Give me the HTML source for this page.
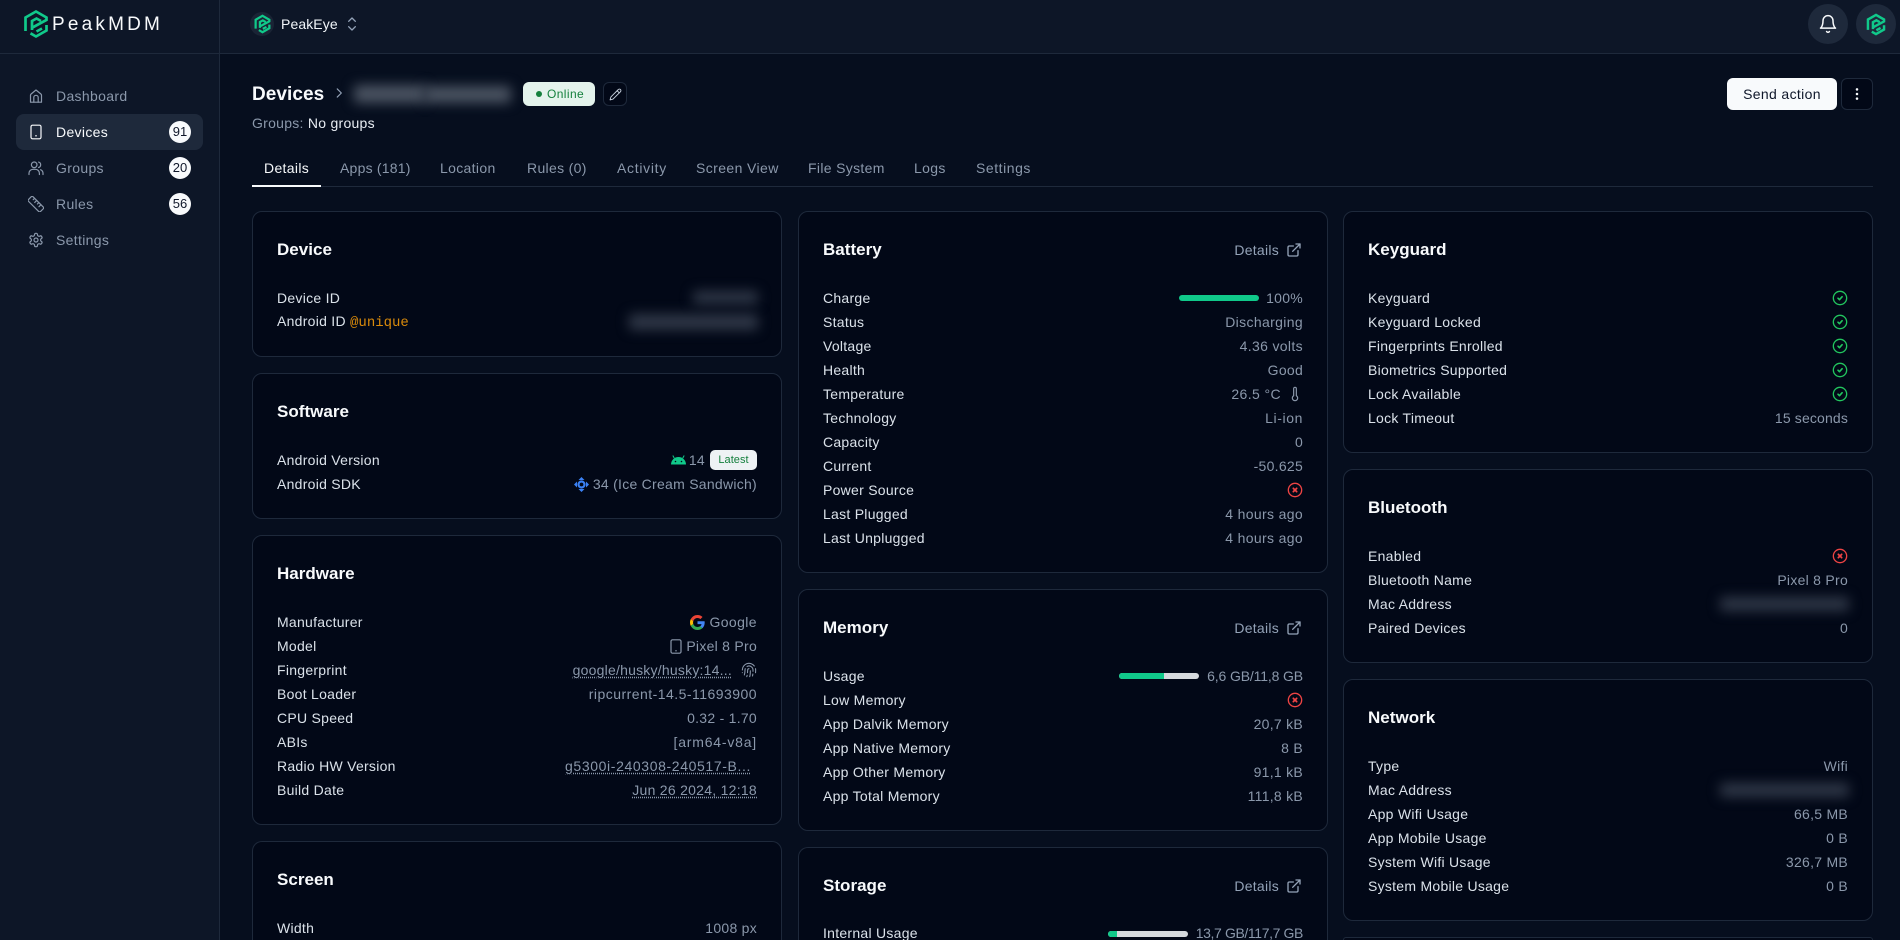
<!DOCTYPE html>
<html lang="en">
<head>
<meta charset="utf-8">
<title>PeakMDM - Devices</title>
<style>
*{box-sizing:border-box;margin:0;padding:0}
html,body{width:1900px;height:940px;overflow:hidden;background:#060e1e}
#root{position:relative;width:1900px;height:940px;overflow:hidden;background:#060e1e;font-family:"Liberation Sans",sans-serif;font-size:14px;letter-spacing:.27px;color:#e2e8f0}
.abs{position:absolute}
svg{display:block;flex:none}
.st{fill:none;stroke:currentColor;stroke-linecap:round;stroke-linejoin:round}
#head{left:0;top:0;width:1900px;height:54px;background:#0d1627;border-bottom:1px solid #1e293b}
#side{left:0;top:54px;width:220px;height:886px;background:#0d1627;border-right:1px solid #1e293b}
#vline{left:219px;top:0;width:1px;height:54px;background:#1e293b}
.logo{fill:none;stroke:#10c98a;stroke-linejoin:miter}
.brand{left:52px;top:12.5px;font-size:19px;letter-spacing:3.2px;color:#f8fafc;line-height:24px}
.nav{left:16px;width:187px;height:36px;border-radius:8px;color:#8b98ab}
.nav svg{position:absolute;left:12px;top:10px}
.nav span{position:absolute;left:40px;top:-.5px;line-height:36px;letter-spacing:.33px}
.nav b{position:absolute;left:153px;top:7px;width:22px;height:22px;border-radius:50%;background:#f8fafc;color:#0f172a;font-weight:400;font-size:13px;letter-spacing:0;text-align:center;line-height:22px}
.nav.on{background:#1e293b;color:#f8fafc}
.circ{top:4px;width:40px;height:40px;border-radius:50%;background:#1e293b;display:flex;align-items:center;justify-content:center}
.tab{top:156px;line-height:24px;color:#8b98ab;white-space:nowrap;letter-spacing:.33px}
.card{position:absolute;background:#020817;border:1px solid #1e293b;border-radius:10px;padding:24px}
.cut{border-bottom:0;border-radius:10px 10px 0 0;overflow:hidden}
.c1{left:252px;width:530px}.c2{left:798px;width:530px}.c3{left:1343px;width:530px}
.hd{display:flex;justify-content:space-between;align-items:center;height:28px;margin-bottom:22px}
.t{font-size:17px;font-weight:700;letter-spacing:.02px;color:#f8fafc;line-height:28px}
.det{display:flex;align-items:center;gap:7px;color:#94a3b8}
.r{display:flex;justify-content:space-between;align-items:center;height:24px;white-space:nowrap;color:#dbe2ea;line-height:23px}
.v{display:flex;align-items:center;gap:4px;color:#8b98ab}
.u{text-decoration:underline dotted #8b98ab;text-underline-offset:2px}
.bl{position:absolute;background:#3a4352;filter:blur(6px);border-radius:3px}
.bar{width:80px;height:6px;border-radius:3px;background:#d5d9dd;overflow:hidden;margin-right:4px}
.bar i{display:block;height:6px;background:#10c98a}
.ok{color:#22c55e}.no{color:#ef4444}
</style>
</head>
<body>
<div id="root">
<div class="abs" id="head"></div>
<div class="abs" id="side"></div>
<div class="abs" id="vline"></div>

<!-- logo -->
<svg class="abs logo" style="left:23px;top:9px" width="26" height="30" viewBox="0 0 26 30" stroke-width="2.700"><path d="M2.500 22V8.500L13 2.500 23.500 8.500V11L9.500 18.500"/><path d="M9 21V12L13.500 9.500 18 12"/><path d="M23.500 16V21.500L13 27.500 7.500 24.300"/><path d="M13.500 22.500L19 19.500"/></svg>
<div class="abs brand">PeakMDM</div>

<!-- org -->
<div class="abs" style="left:250px;top:12px;width:24px;height:24px;border-radius:50%;background:#1a2435"></div>
<svg class="abs logo" style="left:254px;top:14px" width="17" height="20" viewBox="0 0 26 30" stroke-width="3.400"><path d="M2.500 22V8.500L13 2.500 23.500 8.500V11L9.500 18.500"/><path d="M9 21V12L13.500 9.500 18 12"/><path d="M23.500 16V21.500L13 27.500 7.500 24.300"/><path d="M13.500 22.500L19 19.500"/></svg>
<div class="abs" style="left:281px;top:12px;line-height:24px;color:#f1f5f9;letter-spacing:.1px">PeakEye</div>
<svg class="abs st" style="left:344px;top:16px;color:#94a3b8" width="16" height="16" viewBox="0 0 24 24" stroke-width="2"><path d="m7 16 5 5 5-5"/><path d="m7 8 5-5 5 5"/></svg>

<!-- top right -->
<div class="abs circ" style="left:1808px"><svg class="st" style="color:#f8fafc" width="20" height="20" viewBox="0 0 24 24" stroke-width="1.800"><path d="M6 8a6 6 0 0 1 12 0c0 7 3 9 3 9H3s3-2 3-9"/><path d="M10.300 21a1.940 1.940 0 0 0 3.400 0"/></svg></div>
<div class="abs circ" style="left:1856px"><svg class="logo" width="20" height="23" viewBox="0 0 26 30" stroke-width="3.200"><path d="M2.500 22V8.500L13 2.500 23.500 8.500V11L9.500 18.500"/><path d="M9 21V12L13.500 9.500 18 12"/><path d="M23.500 16V21.500L13 27.500 7.500 24.300"/><path d="M13.500 22.500L19 19.500"/></svg></div>

<!-- nav -->
<div class="abs nav" style="top:78px"><svg class="st" width="16" height="16" viewBox="0 0 16 16" stroke-width="1.200"><path d="M2.500 14.200V7.200c0-.5.2-.9.600-1.200L8 2l4.900 4c.4.300.6.700.6 1.200v7z"/><path d="M5.800 14.200V9.500a2.200 2.200 0 0 1 4.400 0v4.700"/></svg><span>Dashboard</span></div>
<div class="abs nav on" style="top:114px"><svg class="st" width="16" height="16" viewBox="0 0 16 16" stroke-width="1.200"><rect x="3" y="1.200" width="10" height="13.600" rx="1.500"/><path d="M8 11.800h.01" stroke-width="1.600"/></svg><span>Devices</span><b>91</b></div>
<div class="abs nav" style="top:150px"><svg class="st" width="16" height="16" viewBox="0 0 16 16" stroke-width="1.200"><circle cx="6.200" cy="4.800" r="2.800"/><path d="M1 14.500v-1.200a4 4 0 0 1 4-4h2.400a4 4 0 0 1 4 4v1.200"/><path d="M10.600 2.100a2.800 2.800 0 0 1 0 5.400"/><path d="M15 14.500v-1.200a4 4 0 0 0-2.400-3.600"/></svg><span>Groups</span><b>20</b></div>
<div class="abs nav" style="top:186px"><svg class="st" width="16" height="16" viewBox="0 0 16 16" stroke-width="1.200"><g transform="rotate(45 8 8)"><rect x="-.5" y="5" width="17" height="6.400" rx="1.200"/><path d="M3 5v2M6 5v2.800M9 5v2M12 5v2.800"/></g></svg><span>Rules</span><b>56</b></div>
<div class="abs nav" style="top:222px"><svg class="st" width="16" height="16" viewBox="0 0 24 24" stroke-width="1.800"><path d="M12.220 2h-.44a2 2 0 0 0-2 2v.18a2 2 0 0 1-1 1.730l-.43.25a2 2 0 0 1-2 0l-.15-.08a2 2 0 0 0-2.730.73l-.22.38a2 2 0 0 0 .73 2.730l.15.1a2 2 0 0 1 1 1.720v.51a2 2 0 0 1-1 1.740l-.15.09a2 2 0 0 0-.73 2.730l.22.38a2 2 0 0 0 2.730.73l.15-.08a2 2 0 0 1 2 0l.43.25a2 2 0 0 1 1 1.730V20a2 2 0 0 0 2 2h.44a2 2 0 0 0 2-2v-.18a2 2 0 0 1 1-1.730l.43-.25a2 2 0 0 1 2 0l.15.08a2 2 0 0 0 2.730-.73l.22-.39a2 2 0 0 0-.73-2.730l-.15-.08a2 2 0 0 1-1-1.740v-.5a2 2 0 0 1 1-1.740l.15-.09a2 2 0 0 0 .73-2.730l-.22-.38a2 2 0 0 0-2.730-.73l-.15.08a2 2 0 0 1-2 0l-.43-.25a2 2 0 0 1-1-1.730V4a2 2 0 0 0-2-2z"/><circle cx="12" cy="12" r="3"/></svg><span>Settings</span></div>

<!-- page head -->
<div class="abs" style="left:252px;top:80px;font-size:19px;font-weight:700;letter-spacing:.05px;line-height:29px;color:#f8fafc">Devices</div>
<svg class="abs st" style="left:332px;top:86px;color:#94a3b8" width="14" height="14" viewBox="0 0 24 24" stroke-width="2"><path d="m9 5 7 7-7 7"/></svg>
<div class="abs bl" style="left:354px;top:85px;width:72px;height:18px;background:#4b5462"></div>
<div class="abs bl" style="left:424px;top:86px;width:87px;height:17px;background:#4b5462"></div>
<div class="abs" style="left:523px;top:82px;width:72px;height:24px;border-radius:6px;background:#e4f3ec;color:#15803d;font-size:12px;letter-spacing:.4px;line-height:24px;padding-left:24px">Online<span class="abs" style="left:13px;top:9px;width:6px;height:6px;border-radius:50%;background:#15803d"></span></div>
<div class="abs" style="left:603px;top:82px;width:24px;height:24px;border-radius:6px;background:#020817;border:1px solid #1e293b;display:flex;align-items:center;justify-content:center"><svg class="st" width="13" height="13" viewBox="0 0 24 24" style="color:#cbd5e1" stroke-width="1.700"><path d="M17 3a2.850 2.830 0 1 1 4 4L7.500 20.500 2 22l1.500-5.500Z"/><path d="m15 5 4 4"/></svg></div>
<div class="abs" style="left:252px;top:112px;line-height:23px;color:#8b98ab">Groups: <span style="color:#e8edf3">No groups</span></div>

<div class="abs" style="left:1727px;top:78px;width:110px;height:32px;border-radius:6px;background:#f8fafc;color:#0f172a;text-align:center;line-height:32px;letter-spacing:.35px">Send action</div>
<div class="abs" style="left:1841px;top:78px;width:32px;height:32px;border-radius:6px;background:#020817;border:1px solid #1e293b;display:flex;align-items:center;justify-content:center"><svg class="st" width="16" height="16" viewBox="0 0 24 24" style="color:#f8fafc" stroke-width="3.800"><path d="M12 5h.01M12 12h.01M12 19h.01"/></svg></div>

<!-- tabs -->
<div class="abs" style="left:252px;top:186px;width:1621px;height:1px;background:#1e293b"></div>
<div class="abs" style="left:252px;top:185px;width:69px;height:2px;background:#f8fafc"></div>
<div class="abs tab" style="left:264px;color:#f8fafc">Details</div>
<div class="abs tab" style="left:340px;letter-spacing:.22px">Apps (181)</div>
<div class="abs tab" style="left:440px">Location</div>
<div class="abs tab" style="left:527px">Rules (0)</div>
<div class="abs tab" style="left:617px;letter-spacing:.7px">Activity</div>
<div class="abs tab" style="left:696px;letter-spacing:.4px">Screen View</div>
<div class="abs tab" style="left:808px">File System</div>
<div class="abs tab" style="left:914px">Logs</div>
<div class="abs tab" style="left:976px;letter-spacing:.55px">Settings</div>

<!-- column 1 -->
<div class="card c1" style="top:211px;height:146px">
  <div class="hd"><div class="t">Device</div></div>
  <div class="r"><span>Device ID</span></div>
  <div class="r"><span>Android ID <span style="font-family:'Liberation Mono',monospace;letter-spacing:0;color:#d98a0b">@unique</span></span></div>
  <div class="bl" style="left:440px;top:79px;width:65px;height:13px;background:#2f3747"></div>
  <div class="bl" style="left:376px;top:102px;width:129px;height:16px;background:#2f3747"></div>
</div>
<div class="card c1" style="top:373px;height:146px">
  <div class="hd"><div class="t">Software</div></div>
  <div class="r"><span>Android Version</span><span class="v"><svg width="15" height="10" viewBox="0 0 15 10" fill="#10c98a"><path d="M0 9.500a7.500 7.500 0 0 1 15 0z"/><path d="M3.300 3.200 1.800.5M11.700 3.200 13.200.5" stroke="#10c98a"/><circle cx="4.500" cy="6.500" r=".8" fill="#020817"/><circle cx="10.500" cy="6.500" r=".8" fill="#020817"/></svg><span style="margin-left:-1px">14</span><span style="margin-left:1px;width:47px;height:20px;border-radius:5px;background:#eef2f4;color:#15803d;font-size:11px;letter-spacing:.05px;text-align:center;line-height:20px">Latest</span></span></div>
  <div class="r"><span>Android SDK</span><span class="v"><svg width="15" height="15" viewBox="0 0 15 15" fill="#3b82f6"><circle cx="7.500" cy="7.500" r="3" fill="none" stroke="#3b82f6" stroke-width="2.200"/><path d="M7.500 0 10.500 3H4.500zM7.500 15 10.500 12H4.500zM0 7.500 3 4.500V10.500zM15 7.500 12 4.500V10.500z"/></svg>34 (Ice Cream Sandwich)</span></div>
</div>
<div class="card c1" style="top:535px;height:290px">
  <div class="hd"><div class="t">Hardware</div></div>
  <div class="r"><span>Manufacturer</span><span class="v" style="letter-spacing:.4px"><svg width="15" height="15" viewBox="0 0 48 48"><path fill="#EA4335" d="M24 9.500c3.540 0 6.710 1.220 9.210 3.600l6.850-6.850C35.900 2.380 30.470 0 24 0 14.620 0 6.510 5.380 2.560 13.220l7.980 6.190C12.430 13.720 17.740 9.500 24 9.500z"/><path fill="#4285F4" d="M46.980 24.550c0-1.570-.15-3.090-.38-4.550H24v9.020h12.940c-.58 2.960-2.260 5.480-4.780 7.180l7.730 6c4.510-4.180 7.090-10.360 7.090-17.650z"/><path fill="#FBBC05" d="M10.530 28.590c-.48-1.450-.76-2.990-.76-4.590s.27-3.140.76-4.590l-7.980-6.190C.92 16.460 0 20.120 0 24c0 3.880.92 7.540 2.560 10.780l7.970-6.190z"/><path fill="#34A853" d="M24 48c6.480 0 11.930-2.130 15.890-5.810l-7.730-6c-2.150 1.450-4.920 2.300-8.160 2.300-6.260 0-11.570-4.220-13.470-9.910l-7.980 6.190C6.510 42.620 14.620 48 24 48z"/></svg>Google</span></div>
  <div class="r"><span>Model</span><span class="v"><svg class="st" width="12" height="15" viewBox="0 0 12 15" stroke-width="1.200"><rect x="1" y=".8" width="10" height="13.400" rx="1.500"/><path d="M6 11.800h.01" stroke-width="1.500"/></svg>Pixel 8 Pro</span></div>
  <div class="r"><span>Fingerprint</span><span class="v" style="gap:9px;letter-spacing:.22px"><span class="u">google/husky/husky:14...</span><svg class="st" width="16" height="16" viewBox="0 0 24 24" stroke-width="1.600"><path d="M12 10a2 2 0 0 0-2 2c0 1.020-.1 2.510-.26 4"/><path d="M14 13.120c0 2.380 0 6.380-1 8.880"/><path d="M17.290 21.020c.12-.6.43-2.300.5-3.020"/><path d="M2 12a10 10 0 0 1 18-6"/><path d="M2 16h.01"/><path d="M21.800 16c.2-2 .131-5.354 0-6"/><path d="M5 19.500C5.500 18 6 15 6 12a6 6 0 0 1 .34-2"/><path d="M8.650 22c.21-.66.45-1.320.57-2"/><path d="M9 6.800a6 6 0 0 1 9 5.200v2"/></svg></span></div>
  <div class="r"><span>Boot Loader</span><span class="v" style="letter-spacing:.47px">ripcurrent-14.5-11693900</span></div>
  <div class="r"><span>CPU Speed</span><span class="v">0.32 - 1.70</span></div>
  <div class="r"><span>ABIs</span><span class="v" style="letter-spacing:.8px">[arm64-v8a]</span></div>
  <div class="r"><span>Radio HW Version</span><span class="v" style="margin-right:6px;letter-spacing:.62px"><span class="u">g5300i-240308-240517-B...</span></span></div>
  <div class="r"><span>Build Date</span><span class="v"><span class="u">Jun 26 2024, 12:18</span></span></div>
</div>
<div class="card c1 cut" style="top:841px;height:99px">
  <div class="hd"><div class="t">Screen</div></div>
  <div class="r"><span>Width</span><span class="v">1008 px</span></div>
</div>

<!-- column 2 -->
<div class="card c2" style="top:211px;height:362px">
  <div class="hd"><div class="t">Battery</div><div class="det" style="margin-right:1px">Details<svg class="st" width="16" height="16" viewBox="0 0 24 24" stroke-width="2"><path d="M18 13v6a2 2 0 0 1-2 2H5a2 2 0 0 1-2-2V8a2 2 0 0 1 2-2h6"/><path d="M15 3h6v6"/><path d="M10 14 21 3"/></svg></div></div>
  <div class="r"><span>Charge</span><span class="v"><span class="bar" style="margin-right:3px"><i style="width:80px"></i></span>100%</span></div>
  <div class="r"><span>Status</span><span class="v" style="letter-spacing:.35px">Discharging</span></div>
  <div class="r"><span>Voltage</span><span class="v" style="letter-spacing:.35px">4.36 volts</span></div>
  <div class="r"><span>Health</span><span class="v">Good</span></div>
  <div class="r"><span>Temperature</span><span class="v" style="gap:6px;letter-spacing:.4px">26.5 °C<svg class="st" width="16" height="16" viewBox="0 0 24 24" stroke-width="1.800"><path d="M14 4v10.540a4 4 0 1 1-4 0V4a2 2 0 0 1 4 0Z"/></svg></span></div>
  <div class="r"><span>Technology</span><span class="v" style="letter-spacing:.6px">Li-ion</span></div>
  <div class="r"><span>Capacity</span><span class="v">0</span></div>
  <div class="r"><span>Current</span><span class="v">-50.625</span></div>
  <div class="r"><span>Power Source</span><svg class="st no" width="16" height="16" viewBox="0 0 24 24" stroke-width="2"><circle cx="12" cy="12" r="10"/><path d="m14.500 9.500-5 5M9.500 9.500l5 5" stroke-width="2.600"/></svg></div>
  <div class="r"><span>Last Plugged</span><span class="v" style="letter-spacing:.35px">4 hours ago</span></div>
  <div class="r"><span>Last Unplugged</span><span class="v" style="letter-spacing:.35px">4 hours ago</span></div>
</div>
<div class="card c2" style="top:589px;height:242px">
  <div class="hd"><div class="t">Memory</div><div class="det" style="margin-right:1px">Details<svg class="st" width="16" height="16" viewBox="0 0 24 24" stroke-width="2"><path d="M18 13v6a2 2 0 0 1-2 2H5a2 2 0 0 1-2-2V8a2 2 0 0 1 2-2h6"/><path d="M15 3h6v6"/><path d="M10 14 21 3"/></svg></div></div>
  <div class="r"><span>Usage</span><span class="v" style="letter-spacing:-.14px"><span class="bar"><i style="width:45px"></i></span>6,6 GB/11,8 GB</span></div>
  <div class="r"><span>Low Memory</span><svg class="st no" width="16" height="16" viewBox="0 0 24 24" stroke-width="2"><circle cx="12" cy="12" r="10"/><path d="m14.500 9.500-5 5M9.500 9.500l5 5" stroke-width="2.600"/></svg></div>
  <div class="r"><span>App Dalvik Memory</span><span class="v">20,7 kB</span></div>
  <div class="r"><span>App Native Memory</span><span class="v">8 B</span></div>
  <div class="r"><span>App Other Memory</span><span class="v">91,1 kB</span></div>
  <div class="r"><span>App Total Memory</span><span class="v">111,8 kB</span></div>
</div>
<div class="card c2 cut" style="top:847px;height:93px">
  <div class="hd"><div class="t">Storage</div><div class="det" style="margin-right:1px">Details<svg class="st" width="16" height="16" viewBox="0 0 24 24" stroke-width="2"><path d="M18 13v6a2 2 0 0 1-2 2H5a2 2 0 0 1-2-2V8a2 2 0 0 1 2-2h6"/><path d="M15 3h6v6"/><path d="M10 14 21 3"/></svg></div></div>
  <div class="r" style="height:18px;overflow:hidden;align-items:flex-start"><span>Internal Usage</span><span class="v" style="letter-spacing:-.38px"><span class="bar"><i style="width:9.500px"></i></span>13,7 GB/117,7 GB</span></div>
</div>

<!-- column 3 -->
<div class="card c3" style="top:211px;height:242px">
  <div class="hd"><div class="t">Keyguard</div></div>
  <div class="r"><span>Keyguard</span><svg class="st ok" width="16" height="16" viewBox="0 0 24 24" stroke-width="2"><circle cx="12" cy="12" r="10"/><path d="m9 12.300 2.200 2.200 4-4.500" stroke-width="2.400"/></svg></div>
  <div class="r"><span>Keyguard Locked</span><svg class="st ok" width="16" height="16" viewBox="0 0 24 24" stroke-width="2"><circle cx="12" cy="12" r="10"/><path d="m9 12.300 2.200 2.200 4-4.500" stroke-width="2.400"/></svg></div>
  <div class="r"><span>Fingerprints Enrolled</span><svg class="st ok" width="16" height="16" viewBox="0 0 24 24" stroke-width="2"><circle cx="12" cy="12" r="10"/><path d="m9 12.300 2.200 2.200 4-4.500" stroke-width="2.400"/></svg></div>
  <div class="r"><span>Biometrics Supported</span><svg class="st ok" width="16" height="16" viewBox="0 0 24 24" stroke-width="2"><circle cx="12" cy="12" r="10"/><path d="m9 12.300 2.200 2.200 4-4.500" stroke-width="2.400"/></svg></div>
  <div class="r"><span>Lock Available</span><svg class="st ok" width="16" height="16" viewBox="0 0 24 24" stroke-width="2"><circle cx="12" cy="12" r="10"/><path d="m9 12.300 2.200 2.200 4-4.500" stroke-width="2.400"/></svg></div>
  <div class="r"><span>Lock Timeout</span><span class="v" style="letter-spacing:.15px">15 seconds</span></div>
</div>
<div class="card c3" style="top:469px;height:194px">
  <div class="hd"><div class="t">Bluetooth</div></div>
  <div class="r"><span>Enabled</span><svg class="st no" width="16" height="16" viewBox="0 0 24 24" stroke-width="2"><circle cx="12" cy="12" r="10"/><path d="m14.500 9.500-5 5M9.500 9.500l5 5" stroke-width="2.600"/></svg></div>
  <div class="r"><span>Bluetooth Name</span><span class="v">Pixel 8 Pro</span></div>
  <div class="r"><span>Mac Address</span></div>
  <div class="r"><span>Paired Devices</span><span class="v">0</span></div>
  <div class="bl" style="left:376px;top:127px;width:129px;height:14px;background:#2f3747"></div>
</div>
<div class="card c3" style="top:679px;height:242px">
  <div class="hd"><div class="t">Network</div></div>
  <div class="r"><span>Type</span><span class="v">Wifi</span></div>
  <div class="r"><span>Mac Address</span></div>
  <div class="r"><span>App Wifi Usage</span><span class="v">66,5 MB</span></div>
  <div class="r"><span>App Mobile Usage</span><span class="v">0 B</span></div>
  <div class="r"><span>System Wifi Usage</span><span class="v">326,7 MB</span></div>
  <div class="r"><span>System Mobile Usage</span><span class="v">0 B</span></div>
  <div class="bl" style="left:376px;top:103px;width:129px;height:14px;background:#2f3747"></div>
</div>
<div class="card c3 cut" style="top:937px;height:3px;padding:0"></div>
</div>
</body>
</html>
